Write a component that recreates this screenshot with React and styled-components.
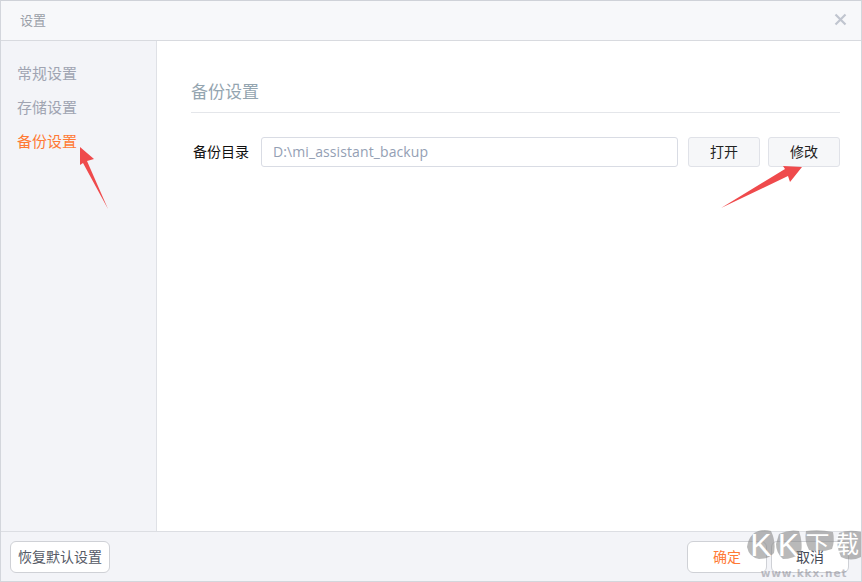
import React from "react";
import styled, { createGlobalStyle } from "styled-components";

const Global = createGlobalStyle`
  html, body { margin: 0; padding: 0; background: #fff; }
  * { box-sizing: border-box; }
`;
const FONT = `"Noto Sans CJK SC", "Liberation Sans", sans-serif`;
const Win = styled.div`
  position: relative; width: 862px; height: 582px; display: flex; flex-direction: column;
  border: 1px solid #d3d6dc; border-top: 1px solid #cfd2d8; background: #fff; font-family: ${FONT}; overflow: hidden;
`;
const TitleBar = styled.header`
  height: 40px; flex: none; display: flex; align-items: center; justify-content: space-between;
  padding: 0 14px 2px 19px; background: #f7f8fa; border-bottom: 1px solid #d8dadf;
  font-size: 13px; color: #9a9fa8;
`;
const Middle = styled.div`flex: 1; display: flex; min-height: 0;`;
const Side = styled.nav`
  width: 156px; flex: none; background: #f3f4f8; border-right: 1px solid #dfe1e6;
  padding-top: 15px; display: flex; flex-direction: column; padding-left: 16px;
`;
const SideItem = styled.div`
  height: 34px; line-height: 34px; font-size: 15px; color: ${p => (p.$active ? "#ff7a35" : "#a0a4b2")};
`;
const Main = styled.main`flex: 1; padding: 36px 22px 0 34px;`;
const Heading = styled.h2`
  margin: 0; font-weight: 400; font-size: 17px; line-height: 28px; height: 36px; color: #94a5b0;
  border-bottom: 1px solid #e4e6ea;
`;
const Row = styled.div`display: flex; align-items: center; margin-top: 24px; height: 30px;`;
const Label = styled.label`font-size: 14px; line-height: 28px; height: 30px; color: #111; width: 70px; padding-left: 2px; flex: none;`;
const PathBox = styled.div`
  width: 417px; height: 30px; border: 1px solid #d9dce4; border-radius: 3px; padding-left: 11px;
  font: 14px/28px "Open Sans", "Liberation Sans", sans-serif; color: #94a0b4; letter-spacing: 0.1px;
`;
const SmallBtn = styled.button`
  width: 72px; height: 30px; margin-left: ${p => p.$gap}px; border: 1px solid #e0e2e8; border-radius: 3px; background: #f6f7f9;
  font-family: ${FONT}; font-size: 14px; line-height: 26px; color: #222; padding: 0 0 2px;
`;
const Footer = styled.footer`
  height: 50px; flex: none; background: #f3f4f8; border-top: 1px solid #dcdee3;
  display: flex; align-items: center; justify-content: space-between; padding: 0 12px 0 9px;
`;
const Right = styled.div`display: flex; gap: 4px;`;
const FootBtn = styled.button`
  width: ${p => p.$w}px; height: 32px; border: 1px solid #cfd1d6; border-radius: 6px; background: #fff;
  font-family: ${FONT}; font-size: 14px; line-height: 28px; color: ${p => p.$color}; padding: 0 0 2px;
`;
const Overlay = styled.svg`position: absolute; left: -1px; top: -1px; pointer-events: none;`;
const Watermark = styled.div`
  position: absolute; right: 0; bottom: 0; width: 114px; height: 52px; pointer-events: none;
  display: flex; flex-direction: column; align-items: center;
`;
const Blobs = styled.svg`position: absolute; left: 0; top: 0;`;
const WmTitle = styled.div`
  position: relative; display: flex; height: 38px; width: 114px; padding-top: 2px;
  font: 400 27px/28px "Liberation Sans", "Noto Sans CJK SC", sans-serif; color: #fff;
`;
const WmChar = styled.span`
  width: ${p => p.$w}px; font-size: ${p => p.$size}px; text-align: center; flex: none;
`;
const WmUrl = styled.div`
  position: relative; font: 700 10.5px/12px "DejaVu Sans", sans-serif; color: rgba(130,130,140,.5);
  letter-spacing: 0.9px; white-space: nowrap;
`;

const BLOB = "rgba(135,135,135,.58)";

export default function App() {
  return (
    <>
      <Global />
      <Win>
        <TitleBar>
          <span>设置</span>
          <svg width="13" height="13" viewBox="0 0 13 13">
            <path d="M1.5 1.5L11.5 11.5M11.5 1.5L1.5 11.5" stroke="#c0c5cf" strokeWidth="2.2" fill="none" />
          </svg>
        </TitleBar>
        <Middle>
          <Side>
            <SideItem>常规设置</SideItem>
            <SideItem>存储设置</SideItem>
            <SideItem $active>备份设置</SideItem>
          </Side>
          <Main>
            <Heading>备份设置</Heading>
            <Row>
              <Label>备份目录</Label>
              <PathBox>D:\mi_assistant_backup</PathBox>
              <SmallBtn $gap={10}>打开</SmallBtn>
              <SmallBtn $gap={8}>修改</SmallBtn>
            </Row>
          </Main>
        </Middle>
        <Footer>
          <FootBtn $w={100} $color="#555a66">恢复默认设置</FootBtn>
          <Right>
            <FootBtn $w={80} $color="#ff7a35">确定</FootBtn>
            <FootBtn $w={78} $color="#444a55">取消</FootBtn>
          </Right>
        </Footer>
        <Overlay width="862" height="582" viewBox="0 0 862 582">
          <path d="M80 147L94 159L87 161L108 209L83 163L80 165Z" fill="#ef4a4c" />
          <path d="M802 167L790 182L788 176L721 208L785 169L783 166Z" fill="#ef4a4c" />
        </Overlay>
        <Watermark>
          <Blobs width="114" height="52" viewBox="0 0 114 52">
            <path d="M6 5Q14 -1 24 2Q29 12 27 24Q22 30 12 30Q2 28 0 18Q1 10 6 5Z" fill={BLOB} />
            <path d="M32 5Q42 0 52 2Q56 14 54 24Q46 30 36 30Q29 24 29 15Z" fill={BLOB} />
            <path d="M59 2Q72 0 86 3Q88 12 85 20Q74 24 62 21Q57 12 59 2Z" fill={BLOB} />
            <path d="M92 4Q102 0 114 3L114 28Q104 33 94 28Q88 16 92 4Z" fill={BLOB} />
          </Blobs>
          <WmTitle>
            <WmChar $w={28} $size={32}>K</WmChar>
            <WmChar $w={27} $size={32}>K</WmChar>
            <WmChar $w={31} $size={24}>下</WmChar>
            <WmChar $w={28} $size={24}>载</WmChar>
          </WmTitle>
          <WmUrl>www.kkx.net</WmUrl>
        </Watermark>
      </Win>
    </>
  );
}
